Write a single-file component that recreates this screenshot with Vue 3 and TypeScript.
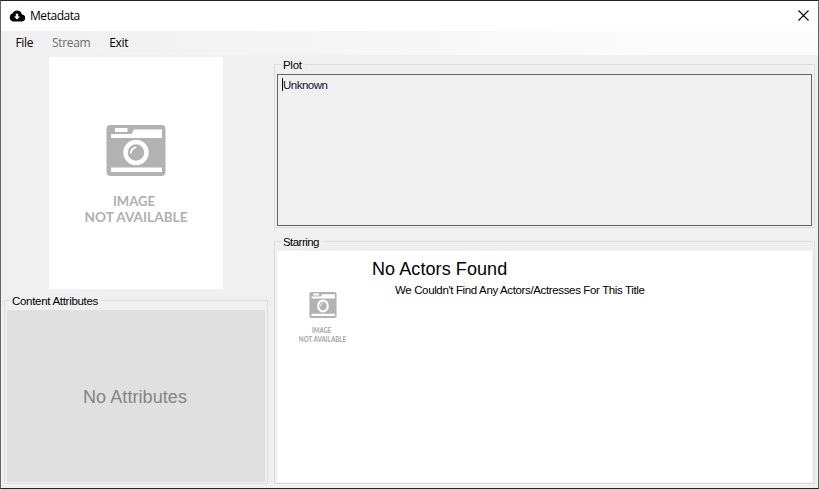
<script setup lang="ts">
import { ref } from 'vue'

interface MenuEntry {
  label: string
  disabled?: boolean
}

const menu: MenuEntry[] = [
  { label: 'File' },
  { label: 'Stream', disabled: true },
  { label: 'Exit' },
]
const pictures = { poster: { width: 174, height: 232 }, thumb: { width: 80, height: 119 } }
const plot = ref('Unknown')
</script>

<template>
  <div class="window">
    <svg class="defs" width="0" height="0" aria-hidden="true">
      <symbol id="no-image" viewBox="0 0 174 232" preserveAspectRatio="none">
        <rect x="57.5" y="68" width="59" height="51" rx="4" fill="#b2b2b2" />
        <path d="M66 71h12.500v4H66z" fill="#fff" />
        <path d="M62 77h20.500l2.500-4.500h28V81H62zM62 110.500h51v4.500H62z" fill="#fff" />
        <circle cx="87" cy="95.500" r="10.500" fill="#b2b2b2" stroke="#fff" stroke-width="4.500" />
        <path d="M81.700 96.500a6 6 0 0 1 5.500-6.200" fill="none" stroke="#fff" stroke-width="1.800" />
      </symbol>
    </svg>

    <header class="titlebar">
      <svg class="cloud" width="16" height="12" viewBox="0 0 16 12">
        <path d="M12.900 4.500A5 5 0 0 0 3.500 3.300 4.300 4.300 0 0 0 4 11.500h8.500a3.500 3.500 0 0 0 .4-7z" fill="#000" />
        <path d="M6.800 3.800h2.400v2.700h2L8 9.600 4.800 6.500h2z" fill="#fff" />
      </svg>
      <h1 class="title">Metadata</h1>
      <button class="close" aria-label="Close">
        <svg width="11" height="11" viewBox="0 0 11 11">
          <path d="M.5.5l10 10M10.500.5l-10 10" stroke="#000" stroke-width="1.100" />
        </svg>
      </button>
    </header>

    <nav class="menubar">
      <span v-for="m in menu" :key="m.label" class="entry" :class="{ disabled: m.disabled }">{{ m.label }}</span>
    </nav>

    <main class="content">
      <div class="left">
        <div class="poster">
          <svg v-bind="pictures.poster" viewBox="0 0 174 232" preserveAspectRatio="none">
            <use href="#no-image" width="174" height="232" />
            <g class="caption">
              <text x="85" y="149.200" textLength="42" lengthAdjust="spacingAndGlyphs">IMAGE</text>
              <text x="87" y="165.200" textLength="103" lengthAdjust="spacingAndGlyphs">NOT AVAILABLE</text>
            </g>
          </svg>
        </div>
        <section class="group attributes">
          <h2 class="legend"><span>Content Attributes</span></h2>
          <div class="empty"><span>No Attributes</span></div>
        </section>
      </div>
      <div class="right">
        <section class="group plot">
          <h2 class="legend"><span>Plot</span></h2>
          <div class="textbox"><i class="caret"></i><span>{{ plot }}</span></div>
        </section>
        <section class="group starring">
          <h2 class="legend"><span>Starring</span></h2>
          <div class="actors">
            <svg class="thumb" v-bind="pictures.thumb" viewBox="0 0 174 232" preserveAspectRatio="none">
              <use href="#no-image" width="174" height="232" />
              <g class="caption">
                <text x="84" y="149" textLength="42" lengthAdjust="spacingAndGlyphs">IMAGE</text>
                <text x="86" y="165" textLength="103" lengthAdjust="spacingAndGlyphs">NOT AVAILABLE</text>
              </g>
            </svg>
            <div class="info">
              <p class="name">No Actors Found</p>
              <p class="note">We Couldn't Find Any Actors/Actresses For This Title</p>
            </div>
          </div>
        </section>
      </div>
    </main>
  </div>
</template>

<style>
body { margin: 0; background: #f0f0f0; }
</style>

<style scoped>
* { box-sizing: border-box; }
h1, h2, p { margin: 0; font-weight: 400; }
.window {
  width: 819px;
  height: 489px;
  border: 1px solid #666;
  border-top-color: #222;
  border-bottom-color: #222;
  background: #f0f0f0;
  color: #000;
  display: flex;
  flex-direction: column;
  overflow: hidden;
  font: 11.500px/14px "Liberation Sans", Arial, sans-serif;
}
.defs { position: absolute; }
.caption { font: 700 12.500px Lato, sans-serif; fill: #b0b0b0; text-anchor: middle; }
.thumb .caption { font-size: 14.500px; fill: #a4a4a4; }
.titlebar {
  height: 30px;
  flex: none;
  background: #fff;
  display: flex;
  align-items: center;
  padding: 0 9px 0 8px;
}
.cloud { margin: -1px 0 0 -0.500px; }
.title {
  margin-left: 5.500px;
  flex: 1;
  font: 12px/16px "Open Sans", "Noto Sans", sans-serif;
  letter-spacing: -0.450px;
}
.close { border: 0; padding: 0; margin: -2px 0 0; background: none; display: flex; }
.menubar {
  height: 24px;
  flex: none;
  display: flex;
  align-items: center;
  gap: 19px;
  padding-left: 14.500px;
  background: linear-gradient(90deg, #f0f0f0, #fcfcfc 85%);
  font: 12px/16px "Open Sans", "Noto Sans", sans-serif;
  letter-spacing: -0.350px;
}
.disabled { color: #6d6d6d; }
.content { flex: 1; min-height: 0; display: flex; gap: 6px; padding: 0 3px 4px; }
.left { width: 264px; display: flex; flex-direction: column; }
.poster { width: 174px; height: 232px; margin: 2px 0 0 45px; background: #fff; }
.poster svg { display: block; }
.group { border: 1px solid #dcdcdc; padding: 0 2px 1px; display: flex; flex-direction: column; }
.legend {
  height: 9px;
  flex: none;
  display: flex;
  align-items: flex-start;
  font: inherit;
  letter-spacing: -0.300px;
}
.legend span { margin: -7px 0 0 3px; padding: 0 3px 0 2px; background: #f0f0f0; }
.attributes { margin-top: 11px; height: 184px; }
.empty {
  flex: 1;
  background: #e0e0e0;
  color: #848484;
  display: flex;
  align-items: center;
  justify-content: center;
  padding: 2px 2px 0 0;
  font-size: 18px;
  letter-spacing: 0.080px;
}
.right { flex: 1; display: flex; flex-direction: column; }
.plot { margin-top: 9px; height: 164px; }
.plot .legend span, .starring .legend span { margin-left: 4px; }
.starring .legend { letter-spacing: -0.550px; }
.textbox {
  flex: 1;
  border: 1px solid #646464;
  padding: 3px 4px;
  display: flex;
  color: #101030;
  letter-spacing: -0.500px;
}
.caret { width: 1px; height: 13px; background: #000; }
.starring { margin-top: 13px; height: 243px; }
.actors { flex: 1; background: #fff; display: flex; }
.thumb { margin: 6px 0 0 6px; }
.info { padding: 8px 0 0 9px; }
.name { font-size: 18px; line-height: 20px; letter-spacing: 0.080px; }
.note { margin: 4px 0 0 23px; letter-spacing: -0.360px; }
</style>
